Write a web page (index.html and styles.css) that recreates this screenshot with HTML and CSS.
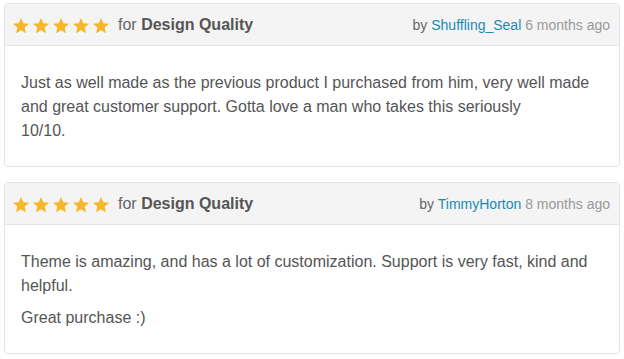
FILE: index.html
```html
<!DOCTYPE html>
<html lang="en">
<head>
    <meta charset="UTF-8">
    <title>Reviews</title>
    <link rel="stylesheet" href="styles.css">
</head>
<body>
    <div class="review">
        <div class="review-header">
            <div class="rating">
                <span class="stars">
                    <svg viewBox="0 0 20 20"><path d="M10 1.2l2.6 5.8 6.3.6-4.8 4.2 1.4 6.2L10 14.8 4.5 18l1.4-6.2L1.1 7.6l6.3-.6z"/></svg>
                    <svg viewBox="0 0 20 20"><path d="M10 1.2l2.6 5.8 6.3.6-4.8 4.2 1.4 6.2L10 14.8 4.5 18l1.4-6.2L1.1 7.6l6.3-.6z"/></svg>
                    <svg viewBox="0 0 20 20"><path d="M10 1.2l2.6 5.8 6.3.6-4.8 4.2 1.4 6.2L10 14.8 4.5 18l1.4-6.2L1.1 7.6l6.3-.6z"/></svg>
                    <svg viewBox="0 0 20 20"><path d="M10 1.2l2.6 5.8 6.3.6-4.8 4.2 1.4 6.2L10 14.8 4.5 18l1.4-6.2L1.1 7.6l6.3-.6z"/></svg>
                    <svg viewBox="0 0 20 20"><path d="M10 1.2l2.6 5.8 6.3.6-4.8 4.2 1.4 6.2L10 14.8 4.5 18l1.4-6.2L1.1 7.6l6.3-.6z"/></svg>
                </span>
                <span class="category">for <strong>Design Quality</strong></span>
            </div>
            <div class="author">by <a href="#">Shuffling_Seal</a> <span class="date">6 months ago</span></div>
        </div>
        <div class="review-body">
            <p>Just as well made as the previous product I purchased from him, very well made and great customer support. Gotta love a man who takes this seriously<br>10/10.</p>
        </div>
    </div>

    <div class="review">
        <div class="review-header">
            <div class="rating">
                <span class="stars">
                    <svg viewBox="0 0 20 20"><path d="M10 1.2l2.6 5.8 6.3.6-4.8 4.2 1.4 6.2L10 14.8 4.5 18l1.4-6.2L1.1 7.6l6.3-.6z"/></svg>
                    <svg viewBox="0 0 20 20"><path d="M10 1.2l2.6 5.8 6.3.6-4.8 4.2 1.4 6.2L10 14.8 4.5 18l1.4-6.2L1.1 7.6l6.3-.6z"/></svg>
                    <svg viewBox="0 0 20 20"><path d="M10 1.2l2.6 5.8 6.3.6-4.8 4.2 1.4 6.2L10 14.8 4.5 18l1.4-6.2L1.1 7.6l6.3-.6z"/></svg>
                    <svg viewBox="0 0 20 20"><path d="M10 1.2l2.6 5.8 6.3.6-4.8 4.2 1.4 6.2L10 14.8 4.5 18l1.4-6.2L1.1 7.6l6.3-.6z"/></svg>
                    <svg viewBox="0 0 20 20"><path d="M10 1.2l2.6 5.8 6.3.6-4.8 4.2 1.4 6.2L10 14.8 4.5 18l1.4-6.2L1.1 7.6l6.3-.6z"/></svg>
                </span>
                <span class="category">for <strong>Design Quality</strong></span>
            </div>
            <div class="author">by <a href="#">TimmyHorton</a> <span class="date">8 months ago</span></div>
        </div>
        <div class="review-body">
            <p>Theme is amazing, and has a lot of customization. Support is very fast, kind and helpful.</p>
            <p>Great purchase :)</p>
        </div>
    </div>
</body>
</html>
```

FILE: styles.css
```css
body {
    font-family: "Liberation Sans", Arial, sans-serif;
    margin: 0;
    padding: 3px 4px 0 4px;
    background-color: #fff;
    color: #555;
}

.review {
    width: 614px;
    border: 1px solid #e1e5e9;
    border-radius: 4px;
    margin-bottom: 15px;
    overflow: hidden;
}

.review-header {
    display: flex;
    justify-content: space-between;
    align-items: center;
    height: 41px;
    padding: 0 9px 0 7px;
    background-color: #f4f4f4;
    border-bottom: 1px solid #e1e5e9;
}

.rating {
    display: flex;
    align-items: center;
}

.stars {
    display: flex;
    gap: 2px;
    margin-top: 2px;
}

.stars svg {
    width: 18px;
    height: 18px;
    fill: #f6b72a;
}

.category {
    font-size: 16px;
    color: #666;
    margin-left: 8px;
}

.category strong {
    color: #555;
}

.author {
    font-size: 14px;
    color: #666;
}

.author a {
    color: #1a8ab5;
    text-decoration: none;
}

.date {
    color: #999;
}

.review-body {
    padding: 25px 16px 15px 16px;
}

.review-body p {
    margin: 0 0 8px 0;
    font-size: 16px;
    line-height: 24px;
}
```
